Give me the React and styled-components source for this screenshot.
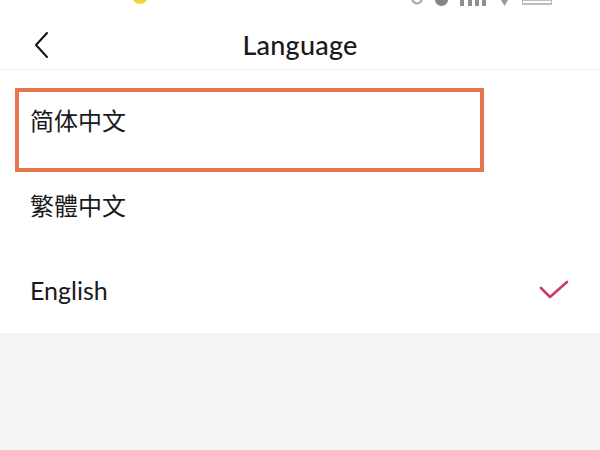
import styled, { createGlobalStyle } from "styled-components"

const GlobalStyle = createGlobalStyle`
    html, body {
        margin: 0;
        padding: 0;
        background: #F5F5F5;
    }
    body {
        font-family: Lato, "Noto Sans", "Noto Sans CJK SC", sans-serif;
        color: #1A1A1A;
    }
`

const Screen = styled.div`
    width: 600px;
    height: 450px;
    position: relative;
    overflow: hidden;
    background: #F5F5F5;
`
const StatusBar = styled.div`
    height: 6px;
    display: flex;
    align-items: flex-end;
    overflow: hidden;
    background: #FFF;
    position: relative;
`
const StatusIcons = styled.div`
    margin-left: auto;
    margin-right: 48px;
    display: flex;
    align-items: flex-end;
    gap: 12px;
    height: 6px;
    opacity: .55;
`
const Dot = styled.span`
    margin-left: 132px;
    width: 16px;
    height: 16px;
    border-radius: 50%;
    background: #F2D53C;
    margin-bottom: 2px;
    flex: none;
`
const Header = styled.div`
    height: 64px;
    box-sizing: border-box;
    padding-top: 13px;
    display: flex;
    align-items: center;
    justify-content: center;
    position: relative;
    background: #FFF;
    border-bottom: 1px solid #F1F1F1;
`
const Back = styled.button`
    position: absolute;
    left: 31px;
    top: 25px;
    border: none;
    background: none;
    padding: 0;
    display: flex;
`
const Title = styled.h1`
    margin: 0;
    font-size: 27px;
    font-weight: 500;
    letter-spacing: .2px;
`
const List = styled.ul`
    list-style: none;
    margin: 0;
    padding: 7px 0 1px;
    background: #FFF;
`
const Item = styled.li`
    height: 85px;
    display: flex;
    align-items: center;
    justify-content: space-between;
    padding: 0 30px 0 30px;
    font-size: ${p => p.cjk ? "24px" : "25px"};
    font-family: ${p => p.cjk
        ? `"Noto Sans CJK SC", "Noto Sans CJK TC", sans-serif`
        : `Lato, "Noto Sans", sans-serif`};
    color: #1A1A1A;
`
const Highlight = styled.div`
    position: absolute;
    left: 15px;
    top: 88px;
    width: 469px;
    height: 84px;
    box-sizing: border-box;
    border: 4px solid #E8764C;
    pointer-events: none;
`

const Check = () => (
    <svg width="32" height="22" viewBox="0 0 32 22" fill="none">
        <path d="M3 9 L12 18 L29 3" stroke="#CF3A62" strokeWidth="2.6" strokeLinecap="round" strokeLinejoin="round" />
    </svg>
)

const languages = [
    { id: "zh-CN", name: "简体中文", cjk: true },
    { id: "zh-TW", name: "繁體中文", cjk: true },
    { id: "en", name: "English", selected: true },
]

const App = () => {
    return (
        <Screen>
            <GlobalStyle />
            <StatusBar>
                <Dot />
                <StatusIcons>
                    <svg width="12" height="6" viewBox="0 0 12 6"><path d="M1 0 Q6 7 11 0" stroke="#555" strokeWidth="2" fill="none" /></svg>
                    <svg width="13" height="6" viewBox="0 0 13 6"><path d="M0 0 A6.5 6 0 0 0 13 0 Z" fill="#222" /></svg>
                    <svg width="27" height="6" viewBox="0 0 27 6">
                        <rect x="0" y="0" width="4" height="6" fill="#333" />
                        <rect x="8" y="0" width="4" height="6" fill="#333" />
                        <rect x="15" y="0" width="4" height="6" fill="#333" />
                        <rect x="22" y="0" width="4" height="6" fill="#333" />
                    </svg>
                    <svg width="11" height="6" viewBox="0 0 11 6"><path d="M2 0 L5.5 6 L9 0 Z" fill="#444" /></svg>
                    <svg width="30" height="6" viewBox="0 0 30 6"><rect x="0" y="0" width="30" height="4" rx="1" fill="none" stroke="#666" strokeWidth="1.5" /></svg>
                </StatusIcons>
            </StatusBar>
            <Header>
                <Back aria-label="back">
                    <svg width="20" height="28" viewBox="0 0 20 28" fill="none">
                        <path d="M16 2 L5 14 L16 26" stroke="#111" strokeWidth="2" strokeLinecap="round" strokeLinejoin="round" />
                    </svg>
                </Back>
                <Title>Language</Title>
            </Header>
            <List>
                {languages.map(({ id, name, cjk, selected }) =>
                    <Item key={id} cjk={cjk}>
                        {name}
                        {selected && <Check />}
                    </Item>
                )}
            </List>
            <Highlight />
        </Screen>
    )
}

export default App
